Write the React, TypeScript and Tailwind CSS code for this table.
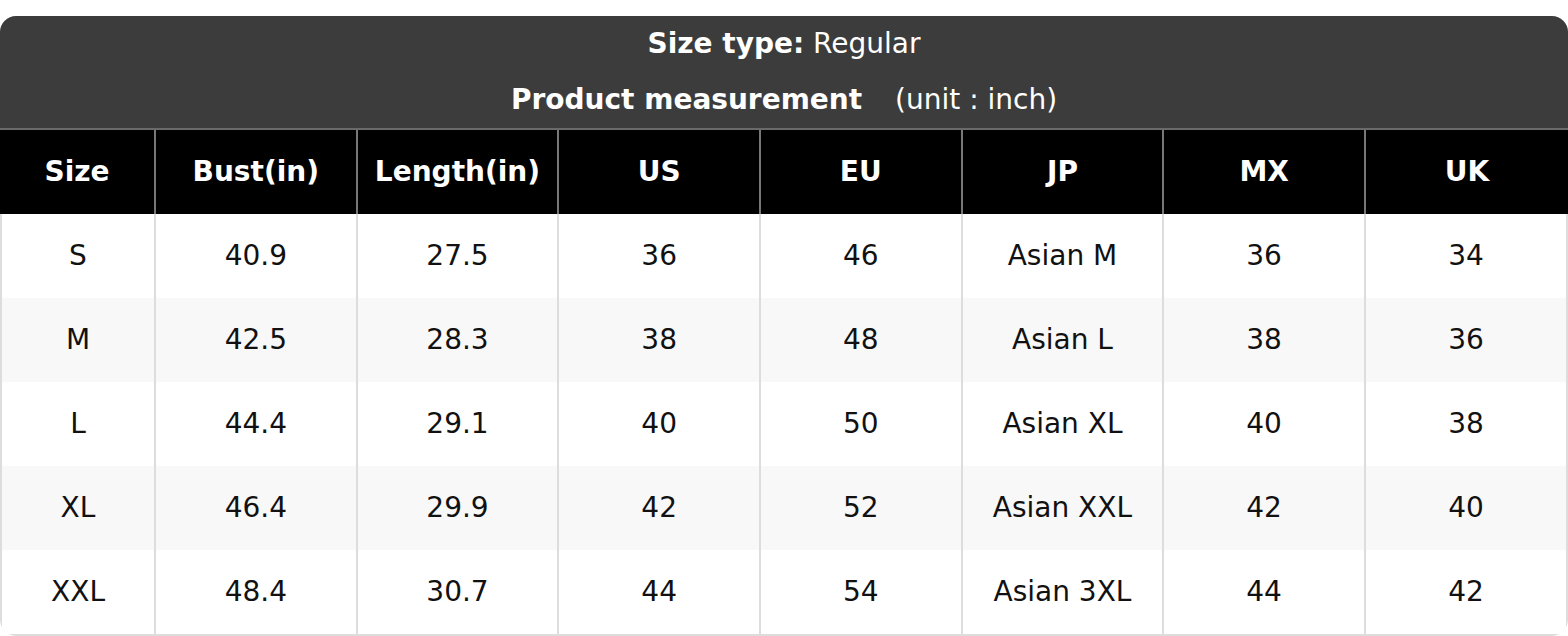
const columns = ['Size', 'Bust(in)', 'Length(in)', 'US', 'EU', 'JP', 'MX', 'UK']

const rows = [
  ['S', '40.9', '27.5', '36', '46', 'Asian M', '36', '34'],
  ['M', '42.5', '28.3', '38', '48', 'Asian L', '38', '36'],
  ['L', '44.4', '29.1', '40', '50', 'Asian XL', '40', '38'],
  ['XL', '46.4', '29.9', '42', '52', 'Asian XXL', '42', '40'],
  ['XXL', '48.4', '30.7', '44', '54', 'Asian 3XL', '44', '42'],
]

export default function App() {
  return (
    <div className="bg-white pt-4 font-['DejaVu_Sans',sans-serif] text-[28px]">
      <div className="overflow-hidden rounded-[16px]">
        <div className="bg-[#3c3c3c] text-white">
          <div className="flex h-[56px] items-center justify-center">
            <span className="font-bold">Size type:</span>
            <span>&nbsp;Regular</span>
          </div>
          <div className="flex h-[56px] items-center justify-center">
            <span className="font-bold">Product measurement</span>
            <span className="ml-[24px]">&nbsp;(unit : inch)</span>
          </div>
        </div>
        <div className="h-[2px] bg-[#6a6a6a]" />
        <div className="grid grid-cols-[154px_repeat(6,201.67px)_1fr] bg-black font-bold text-white">
          {columns.map((c, i) => (
            <div
              key={c}
              className={`flex h-[84px] items-center justify-center ${
                i === 0 ? '' : 'border-l-2 border-[#777]'
              }`}
            >
              {c}
            </div>
          ))}
        </div>
        <div className="rounded-b-[16px] border-x-2 border-b-2 border-[#dddddd] text-[#111]">
          {rows.map((row, r) => (
            <div
              key={row[0]}
              className={`grid grid-cols-[152px_repeat(6,201.67px)_1fr] ${
                r % 2 === 1 ? 'bg-[#f8f8f8]' : 'bg-white'
              }`}
            >
              {row.map((cell, i) => (
                <div
                  key={i}
                  className={`flex h-[84px] items-center justify-center ${
                    i === 0 ? '' : 'border-l-2 border-[#dddddd]'
                  }`}
                >
                  {cell}
                </div>
              ))}
            </div>
          ))}
        </div>
      </div>
    </div>
  )
}
